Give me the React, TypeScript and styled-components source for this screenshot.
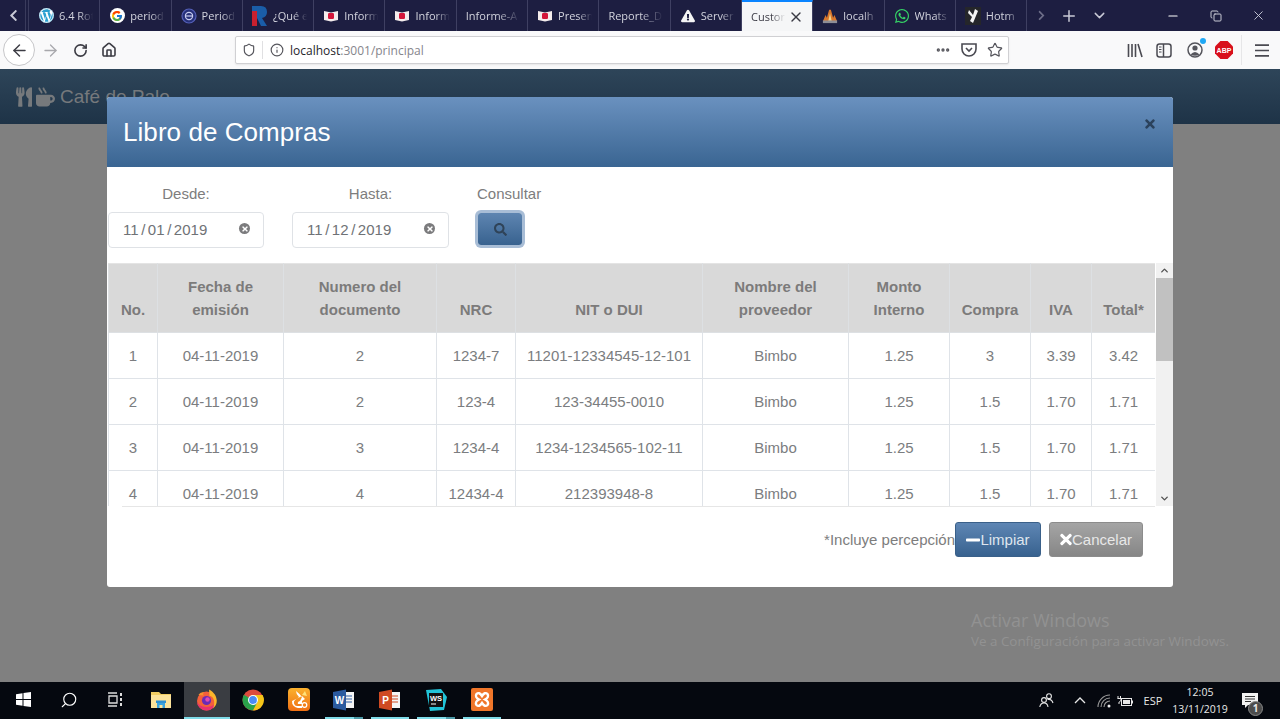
import React from "react";
import styled, { createGlobalStyle } from "styled-components";
import { FaUtensils, FaMugHot, FaSearch, FaMinus, FaTimes, FaChevronLeft, FaChevronRight, FaExclamationTriangle, FaWhatsapp, FaWordpress } from "react-icons/fa";
import { FcGoogle } from "react-icons/fc";
import { LuArrowLeft, LuArrowRight, LuRotateCw, LuHouse, LuShield, LuInfo, LuEllipsis, LuStar, LuPlus, LuChevronDown, LuMinus, LuX, LuCopy, LuSearch, LuChevronUp } from "react-icons/lu";

const Global = createGlobalStyle`
  html, body { margin: 0; padding: 0; background: #808080; }
  * { box-sizing: border-box; }
  body { font-family: "Liberation Sans", Arial, sans-serif; }
`;

const Root = styled.div`
  position: relative;
  width: 1280px;
  height: 719px;
  overflow: hidden;
  display: flex;
  flex-direction: column;
`;

/* ---------- browser tabs ---------- */
const TabStrip = styled.div`
  height: 31px;
  background: #1d1e41;
  display: flex;
  align-items: stretch;
  flex: none;
`;
const StripArrow = styled.div`
  width: 26px;
  flex: none;
  display: flex;
  align-items: center;
  padding-left: 7px;
  color: #c9cad6;
  font-size: 13px;
  border-right: 1px solid #3a3b5c;
`;
const StripGap = styled.div`
  width: 3px;
  flex: none;
  border-right: 1px solid #3a3b5c;
`;
const Tab = styled.div<{ $active?: boolean }>`
  width: 71.3px;
  flex: none;
  display: flex;
  align-items: center;
  gap: ${(p) => (p.$active ? 1 : 5)}px;
  padding: 0 ${(p) => (p.$active ? 8 : 4)}px 0 9px;
  border-right: 1px solid #3f4062;
  background: ${(p) => (p.$active ? "#f5f6f7" : "transparent")};
  border-top: ${(p) => (p.$active ? "2px solid #0a84ff" : "none")};
  color: ${(p) => (p.$active ? "#3a3a44" : "#d3d4de")};
  font-family: "Open Sans", sans-serif;
  font-size: 11px;
  white-space: nowrap;
`;
const TabLabel = styled.span`
  flex: 1;
  min-width: 0;
  overflow: hidden;
  -webkit-mask-image: linear-gradient(90deg, #000 55%, transparent 95%);
  mask-image: linear-gradient(90deg, #000 55%, transparent 95%);
`;
const TabIcon = styled.span`
  width: 16px;
  height: 16px;
  flex: none;
  display: flex;
  align-items: center;
  justify-content: center;
`;
const IconDisc = styled.span`
  width: 15px;
  height: 15px;
  border-radius: 50%;
  background: #fff;
  display: flex;
  align-items: center;
  justify-content: center;
`;
const StripTools = styled.div`
  flex: 1;
  display: flex;
  align-items: center;
  color: #c9cad6;
`;
const StripTool = styled.div<{ $w: number }>`
  width: ${(p) => p.$w}px;
  flex: none;
  display: flex;
  align-items: center;
  justify-content: center;
`;
const StripSpacer = styled.div`
  width: 36px;
  flex: none;
`;

/* ---------- browser toolbar ---------- */
const Toolbar = styled.div`
  height: 38px;
  flex: none;
  background: #f9f9fa;
  display: flex;
  align-items: center;
`;
const NavGroup = styled.div`
  width: 235px;
  flex: none;
  display: flex;
  align-items: center;
  color: #3c3c44;
  padding-left: 3px;
`;
const BackButton = styled.div`
  width: 32px;
  height: 32px;
  border-radius: 50%;
  border: 1px solid #c6c6c9;
  background: #fff;
  display: flex;
  align-items: center;
  justify-content: center;
`;
const NavButton = styled.div<{ $w: number; $dim?: boolean }>`
  width: ${(p) => p.$w}px;
  display: flex;
  justify-content: center;
  color: ${(p) => (p.$dim ? "#a8a8ac" : "#3c3c44")};
`;
const AddressBar = styled.div`
  width: 774px;
  height: 28px;
  flex: none;
  background: #fff;
  border: 1px solid #d0d0d3;
  border-radius: 2px;
  box-shadow: 0 1px 2px rgba(0, 0, 0, 0.08);
  display: flex;
  align-items: center;
  padding: 0 0 0 6px;
  color: #55555c;
`;
const UrlSeparator = styled.div`
  width: 1px;
  height: 18px;
  background: #e0e0e2;
  margin: 0 7px 0 6px;
`;
const Url = styled.span`
  font-family: "Open Sans", sans-serif;
  font-size: 12px;
  color: #85858b;
  margin-left: 6px;
  flex: 1;
  b { font-weight: 400; color: #26262c; }
`;
const UrlAction = styled.span`
  width: 26px;
  display: flex;
  justify-content: center;
`;
const ToolIcons = styled.div`
  flex: 1;
  display: flex;
  align-items: center;
  color: #4a4a52;
  padding-left: 111px;
`;
const ToolIcon = styled.span<{ $w: number }>`
  width: ${(p) => p.$w}px;
  position: relative;
  display: flex;
  justify-content: center;
`;
const ToolDivider = styled.span`
  width: 1px;
  height: 30px;
  background: #e6e6e8;
  margin: 0 5px;
`;
const Abp = styled.span`
  width: 18px;
  height: 18px;
  background: #d8101c;
  clip-path: polygon(30% 0, 70% 0, 100% 30%, 100% 70%, 70% 100%, 30% 100%, 0 70%, 0 30%);
  color: #fff;
  font-size: 7px;
  font-weight: 700;
  display: flex;
  align-items: center;
  justify-content: center;
`;
const BlueDot = styled.span`
  position: absolute;
  top: -4px;
  right: 6px;
  width: 6px;
  height: 6px;
  border-radius: 50%;
  background: #1fa8f5;
`;

/* ---------- page behind the modal ---------- */
const NavBar = styled.div`
  height: 55px;
  flex: none;
  background: linear-gradient(180deg, #2e4559 0%, #1e3347 100%);
  display: flex;
  align-items: center;
  gap: 4px;
  padding: 0 0 0 16px;
  color: #76797c;
  font-size: 19px;
`;
const UtensilsGlyph = styled(FaUtensils)`
  width: 16px;
  height: 20px;
`;
const MugGlyph = styled(FaMugHot)`
  width: 19px;
  height: 20px;
`;
const Brand = styled.span`
  margin-left: 1px;
`;
const Backdrop = styled.div`
  flex: 1;
  background: #808080;
`;
const Watermark = styled.div`
  position: absolute;
  left: 971px;
  top: 610px;
  color: #929292;
  font-family: "Open Sans", sans-serif;
`;
const WatermarkTitle = styled.div`
  font-size: 18px;
  line-height: 21px;
`;
const WatermarkText = styled.div`
  font-size: 13.4px;
  line-height: 21px;
`;

/* ---------- modal ---------- */
const Modal = styled.div`
  position: absolute;
  left: 107px;
  top: 97px;
  width: 1066px;
  height: 490px;
  background: #fff;
  border-radius: 3px;
  overflow: hidden;
  display: flex;
  flex-direction: column;
`;
const ModalHeader = styled.div`
  height: 70px;
  flex: none;
  padding: 0 18px 0 16px;
  display: flex;
  align-items: center;
  justify-content: space-between;
  color: #fff;
  background: linear-gradient(180deg, #6a91bf 0%, #3a6592 100%);
`;
const ModalTitle = styled.h1`
  margin: 0 0 1px;
  font-size: 26px;
  letter-spacing: 0.06px;
  font-weight: 400;
  line-height: 1;
`;
const CloseMark = styled(FaTimes)`
  width: 10px;
  height: 14px;
  color: #2b425c;
  margin: 0 0 17px;
`;
const FilterRow = styled.div`
  display: flex;
  padding: 18px 0 0 1px;
  height: 81px;
  flex: none;
`;
const FilterGroup = styled.div<{ $w: number; $mr: number }>`
  width: ${(p) => p.$w}px;
  margin-right: ${(p) => p.$mr}px;
  display: flex;
  flex-direction: column;
  align-items: center;
`;
const FilterLabel = styled.div`
  height: 18px;
  line-height: 18px;
  font-size: 15px;
  color: #7d7d7d;
  margin-bottom: 9px;
`;
const DateInput = styled.div`
  width: 100%;
  height: 36px;
  border: 1px solid #dfe2e6;
  border-radius: 4px;
  display: flex;
  align-items: center;
  justify-content: space-between;
  padding: 0 13px 1px 14px;
  font-size: 15px;
  color: #6f7276;
  word-spacing: -1.6px;
`;
const ClearDot = styled.span`
  width: 11px;
  height: 11px;
  border-radius: 50%;
  background: #7b7b7d;
  color: #fff;
  display: flex;
  align-items: center;
  justify-content: center;
  margin-top: -2px;
`;
const ConsultGroup = styled.div`
  display: flex;
  flex-direction: column;
  padding-left: 2px;
`;
const SearchButton = styled.button`
  width: 44px;
  height: 32px;
  margin: 1px 0 0 1px;
  border: none;
  border-radius: 3px;
  color: #2f4358;
  font-size: 13px;
  display: flex;
  align-items: center;
  justify-content: center;
  background: linear-gradient(180deg, #5e85b1 0%, #38628f 100%);
  box-shadow: 0 0 0 3px #a8bdd6;
`;
const TableArea = styled.div`
  display: flex;
  height: 243px;
  flex: none;
  margin: 15px 0 0 1px;
`;
const TableClip = styled.div`
  width: 1047px;
  height: 243px;
  overflow: hidden;
  flex: none;
`;
const Table = styled.table`
  width: 1047px;
  table-layout: fixed;
  border-collapse: collapse;
  font-size: 15px;
  color: #7b7d80;
  text-align: center;
`;
const Th = styled.th`
  height: 69px;
  background: #d9d9d9;
  color: #7c7b7b;
  font-weight: 700;
  vertical-align: bottom;
  line-height: 22.5px;
  padding: 12px 2px 11px;
  border: 1px solid #dde0e3;
  border-top: 1px solid #e4e4e4;
`;
const Td = styled.td`
  height: 46px;
  padding: 0 2px;
  border: 1px solid #dfe3e8;
  line-height: 22px;
`;
const Scrollbar = styled.div`
  width: 17px;
  margin-left: 1px;
  background: #f1f1f1;
  display: flex;
  flex-direction: column;
  align-items: center;
  color: #505050;
`;
const ScrollArrow = styled.div`
  height: 15px;
  flex: none;
  display: flex;
  align-items: center;
  justify-content: center;
`;
const ScrollThumb = styled.div`
  width: 100%;
  height: 83px;
  flex: none;
  background: #c1c1c1;
`;
const ScrollTrack = styled.div`
  flex: 1;
`;
const TableRule = styled.div`
  width: 1033px;
  height: 1px;
  flex: none;
  margin-left: 15px;
  background: #e6e6e6;
`;
const Footer = styled.div`
  display: flex;
  align-items: center;
  justify-content: flex-end;
  padding: 15px 30px 0 0;
`;
const Note = styled.span`
  font-size: 15px;
  color: #7d7d7d;
`;
const ActionButton = styled.button<{ $tone: "blue" | "gray"; $w: number }>`
  width: ${(p) => p.$w}px;
  height: 35px;
  margin-left: ${(p) => (p.$tone === "gray" ? 8 : 0)}px;
  border-radius: 3px;
  border: 1px solid ${(p) => (p.$tone === "blue" ? "#3a6089" : "#8c8c8c")};
  color: ${(p) => (p.$tone === "blue" ? "#dfe6ee" : "#e8e8e8")};
  background: ${(p) =>
    p.$tone === "blue"
      ? "linear-gradient(180deg, #5e86b4 0%, #38628f 100%)"
      : "linear-gradient(180deg, #a5a5a5 0%, #868686 100%)"};
  font-family: inherit;
  font-size: 15px;
  display: flex;
  align-items: center;
  justify-content: center;
  padding: 0;
`;
const MinusGlyph = styled(FaMinus)`
  width: 14px;
  height: 16px;
  color: #fff;
`;
const TimesGlyph = styled(FaTimes)`
  width: 12px;
  height: 17px;
  color: #fff;
`;

/* ---------- windows taskbar ---------- */
const Taskbar = styled.div`
  height: 37px;
  flex: none;
  background: #05080f;
  display: flex;
  align-items: stretch;
  color: #fff;
`;
const TaskItem = styled.div<{ $active?: boolean; $open?: boolean; $stack?: boolean }>`
  width: ${(p) => (p.$open ? 38 : 46)}px;
  margin: 0 ${(p) => (p.$open ? "5px" : "0")} 0 ${(p) => (p.$open ? "3px" : "0")};
  flex: none;
  display: flex;
  align-items: center;
  justify-content: center;
  background: ${(p) => (p.$active ? "#3a3d42" : "transparent")};
  border-bottom: 2px solid ${(p) => (p.$active || p.$open ? "#7fdbe8" : "transparent")};
  ${(p) => (p.$stack ? "border-image: linear-gradient(90deg, #7fdbe8 76%, #4c9aa8 76%) 1;" : "")}
`;
const SearchGlyph = styled.span`
  display: flex;
  transform: scaleX(-1);
`;
const Tray = styled.div`
  flex: 1;
  display: flex;
  align-items: center;
  justify-content: flex-end;
  color: #e8e8e8;
  font-family: "Open Sans", sans-serif;
  font-size: 11px;
`;
const TrayItem = styled.div<{ $w: number }>`
  width: ${(p) => p.$w}px;
  flex: none;
  display: flex;
  justify-content: center;
`;
const Clock = styled.div`
  width: 60px;
  flex: none;
  text-align: center;
  font-size: 10.5px;
  line-height: 17px;
`;
const Notify = styled.div`
  width: 50px;
  flex: none;
  display: flex;
  justify-content: center;
  position: relative;
  padding-right: 10px;
`;
const NotifyBadge = styled.span`
  position: absolute;
  left: 18px;
  top: 8px;
  width: 15px;
  height: 15px;
  border-radius: 50%;
  background: #4c4c4c;
  border: 1px solid #888;
  font-size: 10px;
  font-weight: 700;
  display: flex;
  align-items: center;
  justify-content: center;
`;

/* ---------- drawn icons ---------- */
const PdfIcon = () => (
  <svg width="14" height="12" viewBox="0 0 14 12">
    <path d="M0 1 L7 2.5 L14 1 V10 L7 11.5 L0 10Z" fill="#f4ecec" />
    <rect x="4" y="3" width="6" height="6" rx="1.2" fill="#d3163a" />
  </svg>
);
const EdgeIcon = () => (
  <svg width="16" height="16" viewBox="0 0 16 16">
    <circle cx="8" cy="8" r="7" fill="#26307a" stroke="#5560b8" strokeWidth="1.2" />
    <circle cx="8" cy="8" r="3.6" fill="none" stroke="#c9cdf0" strokeWidth="1.2" />
    <rect x="4.6" y="7.4" width="6.8" height="1.2" fill="#c9cdf0" />
  </svg>
);
const RLogo = () => (
  <svg width="15" height="20" viewBox="0 0 15 20">
    <rect x="0" y="5" width="5" height="15" fill="#c9202f" />
    <path d="M0 0 H9 Q15 0 15 6 Q15 11 10 12 L15 20 H9 L5 12 V5 H0Z" fill="#1a5da8" />
  </svg>
);
const LampIcon = () => (
  <svg width="18" height="18" viewBox="0 0 18 18">
    <path d="M1 15 L4 8 L5.5 11 L8 2 L10 2 L12.5 11 L14 8 L17 15Z" fill="#d9772b" />
    <path d="M7 15 L9 6 L11 15Z" fill="#f3d38b" />
    <rect x="1" y="14" width="16" height="3" fill="#8d8d96" />
  </svg>
);
const HotmailIcon = () => (
  <svg width="16" height="18" viewBox="0 0 16 18">
    <rect width="16" height="18" fill="#25262a" />
    <path d="M4 3 L8 8 L10 2 L13 4 L8 16 L5 14 L7 10 L3 6Z" fill="#f4f4f4" />
  </svg>
);
const PocketIcon = () => (
  <svg width="18" height="16" viewBox="0 0 18 16">
    <path d="M2 2 H16 V7 A7 7 0 0 1 2 7Z" fill="none" stroke="#4a4a52" strokeWidth="1.6" />
    <path d="M6 6 L9 9 L12 6" fill="none" stroke="#4a4a52" strokeWidth="1.6" />
  </svg>
);
const LibraryIcon = () => (
  <svg width="16" height="15" viewBox="0 0 16 15">
    <path d="M1.5 1V14M5 1V14M8.5 1V14M11 1L15 14" stroke="#4a4a52" strokeWidth="1.6" fill="none" />
  </svg>
);
const SidebarIcon = () => (
  <svg width="16" height="15" viewBox="0 0 16 15">
    <rect x="1" y="1" width="14" height="13" rx="2.5" fill="none" stroke="#4a4a52" strokeWidth="1.5" />
    <path d="M7.5 1V14" stroke="#4a4a52" strokeWidth="1.5" />
    <path d="M3 4H5.5M3 6.5H5.5M3 9H5.5" stroke="#4a4a52" strokeWidth="1" />
  </svg>
);
const AccountIcon = () => (
  <svg width="16" height="16" viewBox="0 0 16 16">
    <circle cx="8" cy="8" r="7" fill="none" stroke="#55555c" strokeWidth="1.5" />
    <circle cx="8" cy="6" r="2.6" fill="#55555c" />
    <path d="M3.5 12.5 Q8 7.5 12.5 12.5 Q8 15 3.5 12.5Z" fill="#55555c" />
  </svg>
);
const HamburgerIcon = () => (
  <svg width="14" height="13" viewBox="0 0 14 13">
    <path d="M0 1.2H14M0 6.5H14M0 11.8H14" stroke="#4a4a52" strokeWidth="1.7" />
  </svg>
);
const WinLogo = () => (
  <svg width="15" height="15" viewBox="0 0 15 15">
    <path d="M0 2.2 L6.5 1.2 V7 H0Z M7.5 1 L15 0 V7 H7.5Z M0 8 H6.5 V13.8 L0 12.8Z M7.5 8 H15 V15 L7.5 14Z" fill="#fff" />
  </svg>
);
const TaskViewIcon = () => (
  <svg width="17" height="15" viewBox="0 0 17 15">
    <path d="M1 1H10M1 14H10M2 4H10V11H2Z" stroke="#ddd" strokeWidth="1.3" fill="none" />
    <path d="M14 1V4M14 6V9M14 11V14" stroke="#ddd" strokeWidth="2" />
  </svg>
);
const FolderIcon = () => (
  <svg width="20" height="18" viewBox="0 0 20 18">
    <path d="M0 1H8L10 3H20V17H0Z" fill="#f0cc62" />
    <rect x="0" y="4" width="20" height="13" fill="#fbe29a" />
    <path d="M6 11H14V17H11.5V14H8.5V17H6Z" fill="#3ba3dc" />
    <rect x="5" y="9.5" width="10" height="2.5" fill="#2e8fd0" />
  </svg>
);
const FirefoxIcon = () => (
  <svg width="22" height="22" viewBox="0 0 22 22">
    <circle cx="10.5" cy="12" r="9.5" fill="#f4603a" />
    <path d="M1 12 A9.5 9.5 0 0 0 20 12 A9.5 6 0 0 1 1 12Z" fill="#e8326f" />
    <path d="M13 0.5 C22 5 23 15 17 19.5 C20 12 17 7 13.5 7Z" fill="#fbb52b" />
    <path d="M2.5 6 C4 3.5 7 3 8 3.5 C6.5 5 7 6 8 6.5Z" fill="#f9912c" />
    <circle cx="10.5" cy="11.5" r="4.6" fill="#6c2bb5" />
    <circle cx="11.5" cy="10.5" r="2.2" fill="#e14bb0" />
  </svg>
);
const ChromeIcon = () => (
  <svg width="22" height="22" viewBox="0 0 22 22">
    <circle cx="11" cy="11" r="10.5" fill="#dd4b3e" />
    <path d="M11 11 L1.9 5.8 A10.5 10.5 0 0 0 11 21.5 L16.3 12Z" fill="#2aa24a" />
    <path d="M11 6 H20.6 A10.5 10.5 0 0 1 11 21.5 L16 12Z" fill="#f5c518" />
    <circle cx="11" cy="11" r="5" fill="#fff" />
    <circle cx="11" cy="11" r="3.9" fill="#4b8bf5" />
  </svg>
);
const UcIcon = () => (
  <svg width="22" height="23" viewBox="0 0 22 23">
    <defs>
      <linearGradient id="ucg" x1="0" y1="0" x2="0" y2="1">
        <stop offset="0" stopColor="#fbb22e" />
        <stop offset="1" stopColor="#ef6f14" />
      </linearGradient>
    </defs>
    <rect width="22" height="23" rx="4" fill="url(#ucg)" />
    <path d="M4 13 A6.5 6.5 0 0 0 10 20 H14 V18 H9 A3.5 3.5 0 0 1 7 12 L11 9 Q8 6 8 3 Q12 6 14 9 L12 13 Q9 14 10 16 H14 V13 L17 11 L14 8" fill="#fff" />
    <path d="M14 7 L17 3 L19 8Z" fill="#ffe27a" />
    <circle cx="16.5" cy="17" r="2.3" fill="none" stroke="#fff" strokeWidth="1.2" />
  </svg>
);
const OfficeIcon = ({ $bg, $letter }: { $bg: string; $letter: string }) => (
  <svg width="22" height="22" viewBox="0 0 22 22">
    <rect x="9" y="3" width="12" height="16" fill="#f4f4f4" />
    <path d="M12 7H19M12 10H19M12 13H19" stroke={$bg} strokeWidth="1.2" />
    <path d="M0 3 L13 0.5 V21.5 L0 19Z" fill={$bg} />
    <text x="6.5" y="15" fontSize="10" fontWeight="700" fill="#fff" textAnchor="middle" fontFamily="Liberation Sans">{$letter}</text>
  </svg>
);
const WsIcon = () => (
  <svg width="22" height="22" viewBox="0 0 22 22">
    <path d="M1 1 L16 0 L22 8 L19 21 L5 22Z" fill="#22c4d8" />
    <rect x="4" y="4" width="14" height="14" fill="#111" />
    <text x="11" y="12" fontSize="7.5" fontWeight="700" fill="#fff" textAnchor="middle" fontFamily="Liberation Sans">WS</text>
    <rect x="6" y="14.5" width="5" height="1" fill="#fff" />
  </svg>
);
const XamppIcon = () => (
  <svg width="22" height="23" viewBox="0 0 22 23">
    <rect width="22" height="23" rx="2" fill="#f0762a" />
    <path d="M5.5 6 Q8 3.5 11 8 Q14 3.5 16.5 6 Q18.5 9 14 11.5 Q18.5 14 16.5 17 Q14 19.5 11 15 Q8 19.5 5.5 17 Q3.5 14 8 11.5 Q3.5 9 5.5 6Z" fill="none" stroke="#fff" strokeWidth="2.4" />
  </svg>
);
const PeopleIcon = () => (
  <svg width="15" height="15" viewBox="0 0 15 15">
    <circle cx="5" cy="7" r="2.4" fill="none" stroke="#e8e8e8" strokeWidth="1.1" />
    <path d="M0.8 14 Q1.5 10 5 10 Q8.5 10 9 14" fill="none" stroke="#e8e8e8" strokeWidth="1.1" />
    <circle cx="10" cy="3.2" r="2.4" fill="none" stroke="#e8e8e8" strokeWidth="1.1" />
    <path d="M8.5 6.5 Q12.5 5.5 14 10" fill="none" stroke="#e8e8e8" strokeWidth="1.1" />
  </svg>
);
const ChevronUpThin = () => (
  <svg width="12" height="7" viewBox="0 0 12 7">
    <path d="M1 6 L6 1 L11 6" fill="none" stroke="#e8e8e8" strokeWidth="1.3" />
  </svg>
);
const WifiIcon = () => (
  <svg width="14" height="14" viewBox="0 0 14 14">
    <path d="M1 13 A12 12 0 0 1 13 1M4 13 A9 9 0 0 1 13 4M7 13 A6 6 0 0 1 13 7" fill="none" stroke="#9a9a9a" strokeWidth="1.1" />
    <circle cx="12" cy="12" r="1.5" fill="#f0f0f0" />
  </svg>
);
const BatteryIcon = () => (
  <svg width="16" height="12" viewBox="0 0 16 12">
    <rect x="4.5" y="3.5" width="10" height="7" fill="none" stroke="#e8e8e8" />
    <rect x="6" y="5" width="7" height="4" fill="#e8e8e8" />
    <rect x="15" y="5.5" width="1" height="3" fill="#e8e8e8" />
    <path d="M1 1V3.5M3.5 1V3.5M0.5 3.5H4V5.5L2.2 7H2V9" stroke="#e8e8e8" fill="none" />
  </svg>
);
const NoteIcon = () => (
  <svg width="16" height="16" viewBox="0 0 16 16">
    <path d="M0 0H16V12H6L3 15V12H0Z" fill="#f2f2f2" />
    <path d="M3 3.5H13M3 6H13M3 8.5H9" stroke="#333" strokeWidth="1" />
  </svg>
);

const tabs: { label: string; icon: React.ReactNode; active?: boolean }[] = [
  { label: "6.4 Rot", icon: <IconDisc><FaWordpress size={15} color="#2a9fd0" /></IconDisc> },
  { label: "period", icon: <IconDisc><FcGoogle size={12} /></IconDisc> },
  { label: "Period", icon: <EdgeIcon /> },
  { label: "¿Qué e", icon: <RLogo /> },
  { label: "Inform", icon: <PdfIcon /> },
  { label: "Inform", icon: <PdfIcon /> },
  { label: "Informe-A", icon: null },
  { label: "Presen", icon: <PdfIcon /> },
  { label: "Reporte_D", icon: null },
  { label: "Server", icon: <FaExclamationTriangle size={14} color="#f4f4f4" /> },
  { label: "Custon", icon: null, active: true },
  { label: "localh", icon: <LampIcon /> },
  { label: "Whats", icon: <FaWhatsapp size={16} color="#35d366" /> },
  { label: "Hotm", icon: <HotmailIcon /> },
];

const columns: { title: React.ReactNode; width: number }[] = [
  { title: "No.", width: 49 },
  { title: <>Fecha de<br />emisión</>, width: 126 },
  { title: <>Numero del<br />documento</>, width: 153 },
  { title: "NRC", width: 79 },
  { title: "NIT o DUI", width: 187 },
  { title: <>Nombre del<br />proveedor</>, width: 146 },
  { title: <>Monto<br />Interno</>, width: 101 },
  { title: "Compra", width: 81 },
  { title: "IVA", width: 61 },
  { title: "Total*", width: 64 },
];

const rows = [
  ["1", "04-11-2019", "2", "1234-7", "11201-12334545-12-101", "Bimbo", "1.25", "3", "3.39", "3.42"],
  ["2", "04-11-2019", "2", "123-4", "123-34455-0010", "Bimbo", "1.25", "1.5", "1.70", "1.71"],
  ["3", "04-11-2019", "3", "1234-4", "1234-1234565-102-11", "Bimbo", "1.25", "1.5", "1.70", "1.71"],
  ["4", "04-11-2019", "4", "12434-4", "212393948-8", "Bimbo", "1.25", "1.5", "1.70", "1.71"],
];

export default function App() {
  return (
    <Root>
      <Global />
      <TabStrip>
        <StripArrow><FaChevronLeft /></StripArrow>
        <StripGap />
        {tabs.map((t, i) => (
          <Tab key={i} $active={t.active}>
            {t.icon && <TabIcon>{t.icon}</TabIcon>}
            <TabLabel>{t.label}</TabLabel>
            {t.active && <LuX size={16} />}
          </Tab>
        ))}
        <StripTools>
          <StripTool $w={28}><FaChevronRight size={11} color="#6d6e88" /></StripTool>
          <StripTool $w={28}><LuPlus size={18} /></StripTool>
          <StripTool $w={32}><LuChevronDown size={17} /></StripTool>
          <StripSpacer />
          <StripTool $w={43}><LuMinus size={14} color="#ffffff" /></StripTool>
          <StripTool $w={43}><LuCopy size={12} /></StripTool>
          <StripTool $w={43}><LuX size={15} strokeWidth={1.5} /></StripTool>
        </StripTools>
      </TabStrip>

      <Toolbar>
        <NavGroup>
          <BackButton><LuArrowLeft size={19} strokeWidth={1.8} /></BackButton>
          <NavButton $w={30} $dim><LuArrowRight size={19} strokeWidth={1.6} /></NavButton>
          <NavButton $w={30}><LuRotateCw size={15} strokeWidth={2.6} /></NavButton>
          <NavButton $w={28}><LuHouse size={16} strokeWidth={2.4} /></NavButton>
        </NavGroup>
        <AddressBar>
          <LuShield size={14} />
          <UrlSeparator />
          <LuInfo size={14} />
          <Url><b>localhost</b>:3001/principal</Url>
          <UrlAction><LuEllipsis size={16} strokeWidth={3} /></UrlAction>
          <UrlAction><PocketIcon /></UrlAction>
          <UrlAction><LuStar size={16} strokeWidth={1.8} /></UrlAction>
        </AddressBar>
        <ToolIcons>
          <ToolIcon $w={29}><LibraryIcon /></ToolIcon>
          <ToolIcon $w={29}><SidebarIcon /></ToolIcon>
          <ToolIcon $w={34}><AccountIcon /><BlueDot /></ToolIcon>
          <ToolIcon $w={24}><Abp>ABP</Abp></ToolIcon>
          <ToolDivider />
          <ToolIcon $w={30}><HamburgerIcon /></ToolIcon>
        </ToolIcons>
      </Toolbar>

      <NavBar>
        <UtensilsGlyph />
        <MugGlyph />
        <Brand>Café de Palo</Brand>
      </NavBar>
      <Backdrop />
      <Watermark>
        <WatermarkTitle>Activar Windows</WatermarkTitle>
        <WatermarkText>Ve a Configuración para activar Windows.</WatermarkText>
      </Watermark>

      <Taskbar>
        <TaskItem><WinLogo /></TaskItem>
        <TaskItem><SearchGlyph><LuSearch size={18} strokeWidth={1.5} /></SearchGlyph></TaskItem>
        <TaskItem><TaskViewIcon /></TaskItem>
        <TaskItem><FolderIcon /></TaskItem>
        <TaskItem $active><FirefoxIcon /></TaskItem>
        <TaskItem><ChromeIcon /></TaskItem>
        <TaskItem><UcIcon /></TaskItem>
        <TaskItem $open $stack><OfficeIcon $bg="#2b5a9f" $letter="W" /></TaskItem>
        <TaskItem $open><OfficeIcon $bg="#cf4a22" $letter="P" /></TaskItem>
        <TaskItem $open $stack><WsIcon /></TaskItem>
        <TaskItem $open><XamppIcon /></TaskItem>
        <Tray>
          <TrayItem $w={40}><PeopleIcon /></TrayItem>
          <TrayItem $w={28}><ChevronUpThin /></TrayItem>
          <TrayItem $w={20}><WifiIcon /></TrayItem>
          <TrayItem $w={22}><BatteryIcon /></TrayItem>
          <TrayItem $w={34}>ESP</TrayItem>
          <Clock>12:05<br />13/11/2019</Clock>
          <Notify><NoteIcon /><NotifyBadge>1</NotifyBadge></Notify>
        </Tray>
      </Taskbar>

      <Modal>
        <ModalHeader>
          <ModalTitle>Libro de Compras</ModalTitle>
          <CloseMark />
        </ModalHeader>
        <FilterRow>
          <FilterGroup $w={156} $mr={28}>
            <FilterLabel>Desde:</FilterLabel>
            <DateInput>11 / 01 / 2019<ClearDot><FaTimes size={8} /></ClearDot></DateInput>
          </FilterGroup>
          <FilterGroup $w={157} $mr={26}>
            <FilterLabel>Hasta:</FilterLabel>
            <DateInput>11 / 12 / 2019<ClearDot><FaTimes size={8} /></ClearDot></DateInput>
          </FilterGroup>
          <ConsultGroup>
            <FilterLabel>Consultar</FilterLabel>
            <SearchButton><FaSearch /></SearchButton>
          </ConsultGroup>
        </FilterRow>
        <TableArea>
          <TableClip>
            <Table>
              <colgroup>
                {columns.map((c, i) => <col key={i} width={c.width} />)}
              </colgroup>
              <thead>
                <tr>{columns.map((c, i) => <Th key={i}>{c.title}</Th>)}</tr>
              </thead>
              <tbody>
                {rows.map((r, i) => (
                  <tr key={i}>{r.map((v, j) => <Td key={j}>{v}</Td>)}</tr>
                ))}
              </tbody>
            </Table>
          </TableClip>
          <Scrollbar>
            <ScrollArrow><LuChevronUp size={11} strokeWidth={3} /></ScrollArrow>
            <ScrollThumb />
            <ScrollTrack />
            <ScrollArrow><LuChevronDown size={11} strokeWidth={3} /></ScrollArrow>
          </Scrollbar>
        </TableArea>
        <TableRule />
        <Footer>
          <Note>*Incluye percepción</Note>
          <ActionButton $tone="blue" $w={86}><MinusGlyph />Limpiar</ActionButton>
          <ActionButton $tone="gray" $w={94}><TimesGlyph />Cancelar</ActionButton>
        </Footer>
      </Modal>
    </Root>
  );
}
